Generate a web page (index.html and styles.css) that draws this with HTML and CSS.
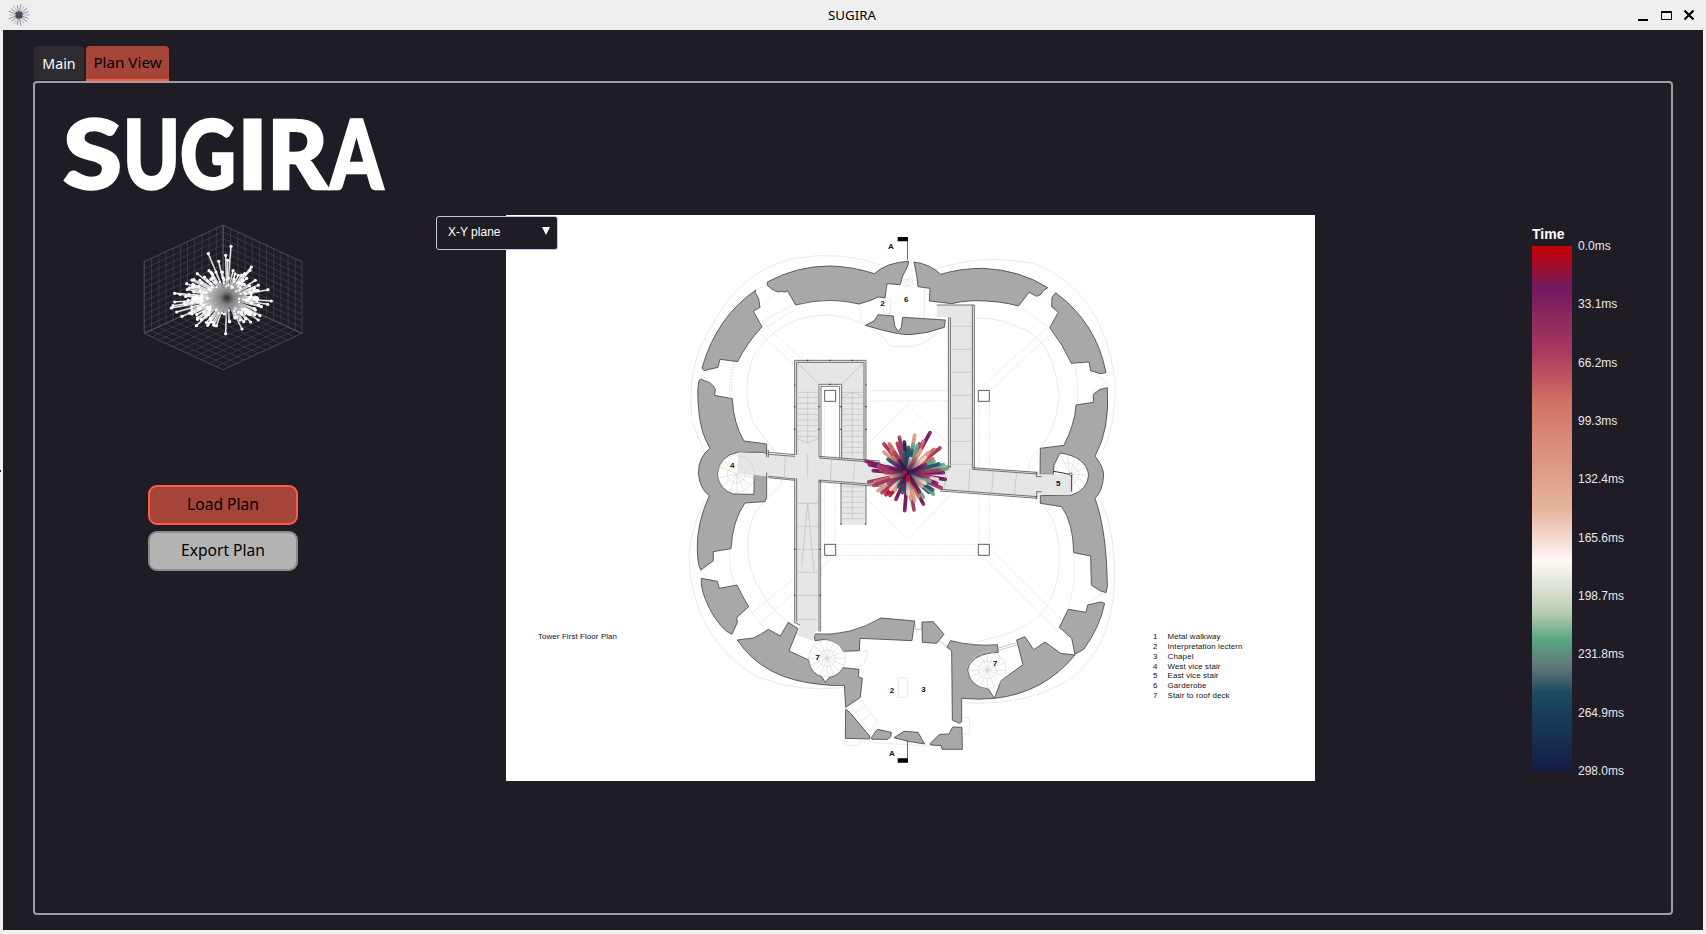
FILE: index.html
```html
<!DOCTYPE html>
<html lang="en">
<head>
<meta charset="utf-8">
<title>SUGIRA</title>
<link rel="stylesheet" href="styles.css">
</head>
<body>
<div class="window">
  <header class="titlebar">
    <svg class="app-icon" viewBox="0 0 22 22"><g id="appRays"></g><rect x="7.5" y="7.5" width="7" height="7" rx="2" fill="#4b4a5c"/></svg>
    <h1 class="title">SUGIRA</h1>
    <svg class="controls" viewBox="0 0 58 14"><path d="M0 12h10" stroke="#000" stroke-width="2"/><path d="M23.5 4.500h10v7h-10z" fill="none" stroke="#000" stroke-width="1"/><path d="M23 4h11" stroke="#000" stroke-width="2"/><path d="M46.500 2.500l9 9m0-9l-9 9" stroke="#000" stroke-width="2.200"/></svg>
  </header>
  <main class="app">
    <nav class="tabs"><span class="tab">Main</span><span class="tab active">Plan View</span></nav>
    <section class="panel">
      <aside class="side">
        <svg class="logo" viewBox="55 100 340 110">
          <g class="word"><text x="63" y="188.500" textLength="59" lengthAdjust="spacingAndGlyphs">S</text><text x="123" y="188.500" textLength="57" lengthAdjust="spacingAndGlyphs">U</text><text x="180" y="188.500" textLength="56" lengthAdjust="spacingAndGlyphs">G</text><text x="237" y="188.500" textLength="31" lengthAdjust="spacingAndGlyphs">I</text><text x="267" y="188.500" textLength="61" lengthAdjust="spacingAndGlyphs">R</text><text x="330" y="188.500" textLength="53" lengthAdjust="spacingAndGlyphs">A</text></g>
        </svg>
        <svg class="cube" viewBox="0 0 480 440">
          <defs><pattern id="cells" width="10" height="10" patternUnits="userSpaceOnUse"><path d="M0 0H10M0 0V10" stroke="#646168" stroke-width="1" fill="none"/></pattern></defs>
          <g transform="translate(-70 -43)">
            <g fill="url(#cells)" stroke="#58555c" stroke-width=".8">
              <rect width="110" height="110" transform="matrix(2.155 -1 0 1.959 73 156)"/>
              <rect width="110" height="110" transform="matrix(2.155 1 0 1.959 310 46)"/>
              <rect width="110" height="110" transform="matrix(2.155 .991 -2.155 .991 310 262)"/>
            </g>
            <g id="whiteBurst"></g>
          </g>
        </svg>
        <div class="buttons"><button class="btn primary">Load Plan</button><button class="btn">Export Plan</button></div>
      </aside>

      <div class="stage">
        <svg class="plan" viewBox="506 215 809 566">
          <rect x="506" y="215" width="809" height="566" fill="#fff"/>
          <g transform="translate(680 220) scale(.33333)">
            <g class="faint">
              <path d="M35 590Q20 430 95 320Q180 150 345 115Q480 90 610 137M760 150Q900 100 1060 130Q1270 210 1305 480Q1310 620 1265 700M1265 845Q1310 950 1303 1100Q1290 1280 1180 1370Q1050 1460 850 1448M75 700L35 600M75 840Q15 960 30 1060Q60 1270 230 1370Q360 1420 493 1402"/>
              <path d="M220 610Q180 510 220 410Q290 290 440 285Q560 290 632 378Q690 386 725 372L830 300Q930 280 1012 320Q1120 350 1138 530Q1130 640 1050 720L1043 790 1070 840Q1140 890 1138 1020Q1135 1180 1010 1230Q920 1265 810 1280M220 610L305 720V795L245 850Q190 920 208 1030Q240 1150 330 1210"/>
              <path d="M848 1492h20v50h-20M495 1555v21h43v-15M540 1565L745 1578M655 1374h28v58h-28zM512 1458l28-20 53 68-27 26zM527 1478l28-20M546 1501l27-20M517 1293h48q-10 50-35 50"/>
              <path d="M672 178h25v22h-25zM678 183h12v12h-12zM537 252l8 55M610 240h22v40h-22zM733 205v65l-2 25M735 205l10 20"/>
            </g>
            <g class="dash">
              <path d="M558 512H895M558 543H895M433 545V974M465 545V974M897 545V974M928 545V974M467 974H895M467 1006H895M235 335L432 520M250 310L455 500M920 520L1110 345M905 500L1100 325M435 1000L215 1180M455 1015L235 1215M905 1005L1130 1230M935 990L1145 1200"/>
              <path d="M682 555L480 755 682 960 883 750ZM245 305L345 250M260 320L360 260M160 430Q145 480 150 530M165 430Q152 480 157 530M150 990Q145 1050 165 1090M1185 430Q1195 480 1193 545M1182 1000Q1190 1080 1165 1160M1025 265L1105 320M65 465L118 440M65 465L106 500M1175 1190L1140 1230M205 1165L260 1235"/>
              <path d="M62 1055L110 1020M62 1060L112 1090M228 210L262 196M240 262L285 220M1103 205L1070 245M1120 218L1090 203M1230 455L1280 485 1235 520M1280 1110L1225 1150M1235 1090L1270 1130"/>
            </g>
            <g class="wall">
              <path d="M262 186Q350 138 450 138 520 140 583 161 620 127 686 124L683 138 668 168 661 194 621 191 615 234 595 231 570 242 537 252Q490 241 450 241 400 241 347 255L322 212Q315 220 305 214 290 222 262 196Z"/>
              <path d="M228 210Q110 290 66 444L72 452 96 446 114 442 120 418 173 425Q200 370 246 320L220 274 240 262 236 236 225 216Z"/>
              <path d="M58 480Q50 500 56 570 62 640 90 685 56 710 55 758 58 805 88 827 50 910 52 985 52 1030 62 1050L100 1022 100 995 153 986Q158 900 195 849L255 845 260 832 260 766 222 766 222 823 160 822Q118 810 112 763 118 705 175 697L250 697 260 705 260 672 192 663Q160 610 157 536L104 526 106 508Q95 485 72 482 64 474 58 480Z"/>
              <path d="M556 316L583 302 594 284 640 288 644 318 655 335 664 322 668 292 796 300 793 322Q740 342 690 344 650 345 556 316Z"/>
              <path d="M702 126Q750 132 782 163 840 145 910 145 1020 150 1103 203L1090 212 1082 224 1070 229 1047 217 1016 258Q960 242 880 242 840 244 815 251L748 243 750 205 714 200 710 165Z"/>
              <path d="M1127 218Q1250 310 1278 458L1260 461 1232 452 1227 426 1174 430Q1150 375 1109 323L1135 277 1115 260 1116 232Z"/>
              <path d="M1282 503Q1290 630 1245 708 1270 740 1271 765 1268 815 1245 835 1280 930 1282 1100L1278 1118 1260 1112 1234 1095 1232 1008 1181 998Q1180 910 1145 860L1081 850V827L1175 825Q1222 810 1226 765 1218 710 1140 699L1122 735 1120 763 1090 763 1080 770 1081 685 1152 676Q1185 610 1188 555L1240 547 1240 523 1260 508Z"/>
            </g>
            <g class="wall" transform="translate(0 660)">
              <path d="M64 418Q62 440 75 475 100 540 140 574L156 583 172 547 170 533 206 500Q190 475 171 435L118 445 112 424 64 415Z"/>
              <path d="M172 600Q250 720 430 734 470 738 493 736L497 802 541 772 547 715 535 710 537 688 488 683Q480 705 447 713L436 727 425 710Q390 700 386 660L327 633 354 566 325 547 301 588 265 568 242 583 220 594Z"/>
              <path d="M402 582Q510 590 603 534L704 543 696 602 540 595 538 632 490 634Q480 605 437 598L405 602Z"/>
              <path d="M497 808L510 818 569 888V897L496 895ZM574 893L592 868 634 877 632 890 624 898 576 898ZM642 893L672 874 714 877 734 912 685 904Z"/>
              <path d="M726 546L760 545 792 583 770 610 727 607Z"/>
              <path d="M812 602Q880 620 952 614L955 637Q875 640 863 690 868 740 925 747L943 775Q900 780 845 775V845L838 850 817 840 815 632 801 622Z"/>
              <path d="M943 775L963 722 1029 674 1010 600 1035 590 1061 629 1095 606 1142 640 1185 645Q1090 760 943 775ZM1185 643L1212 627Q1260 560 1274 490L1262 486 1223 495 1218 517 1165 508 1138 562 1175 595ZM846 862L847 928H786L784 917 751 915V910L779 883 807 882 818 861Z"/>
            </g>
            <g class="walk">
              <path d="M344 421H558V914H483V493H417V1235L344 1210Z"/>
              <path d="M770 255H883V755H805V292H770Z"/>
              <path d="M175 697L265 702 1072 757 1080 763H1172V825H1080L1072 833 265 770 222 766 170 760Z" stroke="none"/>
              <path d="M417 710L558 722V790L417 780Z" stroke="none"/>
              <path d="M358 1213L408 1230 398 1262 350 1245Z" stroke="none"/>
            </g>
            <g class="rail">
              <path d="M344 705V421H558V720M350 705V427H552V720M417 710V493H485V715M423 710V499H479V715M344 775V1208L360 1215M350 775V1205M417 780V1235M422 780V1235M483 790V914M558 795V914M805 744V292M811 744V292M883 747V255H770M877 745V255"/>
              <path d="M265 697L345 704M265 703L345 709M417 709L600 723M417 714L600 728M265 769L345 777M265 773L345 781M417 780L640 798M417 785L640 803M780 735L812 740M877 743L1072 757M877 748L1072 762M780 808L1072 830M780 813L1072 835M260 690V712M265 690V712M260 758V775M1070 755V770H1085M1070 837V815H1085"/>
              <g class="posts"><path d="M344 495v0M344 560v0M344 628v0M558 495v0M558 560v0M558 628v0M417 560v0M417 628v0M483 560v0M483 628v0M383 421v0M450 421v0M517 421v0M450 493v0M483 912v0M556 912v0M344 988v0M420 988v0M344 1126v0M420 1126v0"/></g>
            </g>
            <g class="thin">
              <path d="M350 517H415M350 533H415M350 550H415M350 567H415M350 583H415M350 600H415M350 617H415M350 633H415M350 649H415M487 517H552M487 533H552M487 550H552M487 567H552M487 583H552M487 600H552M487 617H552M487 633H552M487 649H552M487 666H552M487 682H552M487 698H552M383 517V670M517 517V710M350 655L383 670 415 655M487 530L517 517 552 530"/>
              <path d="M487 800H552M487 815H552M487 831H552M487 847H552M487 863H552M487 880H552M487 896H552M517 795V896M350 850H417M350 919H417M350 988H417M350 1057H417M350 1126H417M350 1198H417M365 1040L383 850 402 1055"/>
              <path d="M811 319H877M811 388H877M811 457H877M811 526H877M811 595H877M811 664H877M811 733H877M316 705L313 772M383 702V775M455 717L451 783M525 722L519 787M800 740L793 808M870 745L865 813M940 752L935 820M1010 757L1003 825M350 427L417 493M552 427L485 493"/>
            </g>
            <g class="spiral"><circle cx="169" cy="762" r="55"/><circle cx="169" cy="762" r="27"/><path d="M169 762l-50-22M169 762l-38-40M169 762l-55 12M169 762l-42 36M169 762l-20 53M169 762l3 57M169 762l25 52M169 762l44 35M169 762l53 12"/>
              <circle cx="441" cy="1315" r="55"/><circle cx="441" cy="1315" r="25"/><path d="M386 1315h110M441 1260v110M402 1276l78 78M480 1276l-78 78M420 1264l42 102M462 1264l-42 102M390 1294l102 42M390 1336l102-42"/>
              <circle cx="922" cy="1350" r="55"/><circle cx="922" cy="1350" r="27"/><path d="M867 1350h110M922 1295v110M883 1311l78 78M961 1311l-78 78M901 1299l42 102M943 1299l-42 102M871 1329l102 42M871 1371l102-42"/>
              <path d="M1171 763l-30-58M1171 763l-10-60M1171 763l15-57M1171 763l34-43M1171 763l48-22M1171 763l55 2M1171 763l48 26M1171 763l30 47M1171 763V823M1150 730Q1180 720 1197 760 1195 785 1172 795"/></g>
            <path d="M1121 754L1171 763M1175 763V815" fill="none" stroke="#333" stroke-width="3"/><circle cx="1172" cy="763" r="4" fill="#fff" stroke="#222" stroke-width="2"/>
            <g fill="#fff" stroke="#444" stroke-width="2.6"><path d="M434 511h33v33h-33zM895 511h33v33h-33zM434 973h33v33h-33zM895 973h33v33h-33z"/></g>
            <path d="M955 1284L1010 1268M955 1291L1012 1275M706 1210v18h18v-18M778 1262l25 20" class="door"/>
            <path d="M653 51h31v13h-31zM653 1615h31v13h-31z" fill="#000"/><path d="M682.500 64V120M682.500 1562V1616" stroke="#222" stroke-width="2"/>
          </g>
          <g class="tag"><text x="891" y="248.500">A</text><text x="892" y="756">A</text><text x="882.500" y="306">2</text><text x="906.300" y="302">6</text><text x="732.300" y="468">4</text><text x="1058.200" y="486">5</text><text x="817.500" y="660">7</text><text x="995" y="666">7</text><text x="892" y="692.500">2</text><text x="923.500" y="692">3</text></g>
          <g class="key"><text x="538" y="639" textLength="79">Tower First Floor Plan</text>
            <text x="1153" y="639">1</text><text x="1167.500" y="639" textLength="53">Metal walkway</text>
            <text x="1153" y="649">2</text><text x="1167.500" y="649" textLength="75">Interpretation lectern</text>
            <text x="1153" y="658.500">3</text><text x="1167.500" y="658.500" textLength="26">Chapel</text>
            <text x="1153" y="668.500">4</text><text x="1167.500" y="668.500" textLength="53">West vice stair</text>
            <text x="1153" y="678">5</text><text x="1167.500" y="678" textLength="51">East vice stair</text>
            <text x="1153" y="688">6</text><text x="1167.500" y="688" textLength="39">Garderobe</text>
            <text x="1153" y="697.500">7</text><text x="1167.500" y="697.500" textLength="62">Stair to roof deck</text></g>
          <g id="colorBurst" transform="translate(860 420) scale(.33333)" stroke-linecap="round"></g>
        </svg>
        <div class="select"><span>X-Y plane</span><i class="arrow"></i></div>
      </div>

      <div class="legend">
        <strong>Time</strong>
        <div class="scale"><div class="ramp"></div>
          <div class="ticks"><span>0.0ms</span><span>33.1ms</span><span>66.2ms</span><span>99.3ms</span><span>132.4ms</span><span>165.6ms</span><span>198.7ms</span><span>231.8ms</span><span>264.9ms</span><span>298.0ms</span></div></div>
      </div>
    </section>
  </main>
  <i class="edge-mark"></i>
</div>
<script src="bursts.js"></script>
</body>
</html>
```
FILE: styles.css
```css
* { box-sizing: border-box; }
body { margin: 0; font-family: "Liberation Sans", Arial, sans-serif; color: #fff; }
svg { display: block; }
.window { position: relative; width: 1706px; height: 934px; padding: 0 3px 4px; background: #f0eff1; display: flex; flex-direction: column; overflow: hidden; }
.titlebar { height: 30px; flex: none; margin: 0 -3px; padding: 0 10px 0 8px; background: #eee; display: grid; grid-template-columns: 1fr auto 1fr; align-items: center; }
.app-icon { width: 22px; height: 22px; }
.title { margin: 0; font: 400 13.3px "Noto Sans", sans-serif; color: #000; }
.controls { width: 58px; height: 14px; justify-self: end; }
.app { flex: 1; background: #1f1c26; padding: 16px 30px 15px; display: flex; flex-direction: column; }
.tabs { display: flex; gap: 2px; height: 35px; padding-left: 1px; font: 15.4px/35px "Noto Sans", sans-serif; }
.tab { width: 50px; height: 34px; text-align: center; background: #2e2b33; border-radius: 4px 4px 0 0; font-size: 14.2px; line-height: 36px; }
.tab.active { width: 83px; height: 35px; font-size: 15.2px; color: #000; background: #a54539; border-bottom: 2px solid #ff5e45; line-height: 33px; }
.panel { flex: 1; border: 2px solid #a09d9f; border-radius: 4px; display: flex; align-items: flex-start; padding: 17px 0 0 20px; }
.side { width: 381px; display: flex; flex-direction: column; }
.logo { width: 340px; height: 110px; overflow: visible; }
.word text { font: 900 95px Lato, sans-serif; fill: #fff; stroke: #fff; stroke-width: 2.4px; }
.cube { width: 160px; height: 146.667px; margin: 14px 0 0 88px; }
.buttons { display: grid; gap: 6px; width: 150px; margin: 114px 0 0 93px; }
.btn { height: 40px; padding: 0 0 1px; border: 2px solid #8b8b8b; border-radius: 9px; background: #b3b3b3; color: #000; font: 15.6px "Noto Sans", sans-serif; }
.btn.primary { background: #a54539; border-color: #ff5e45; }
.stage { position: relative; margin: 115px 0 0; padding-left: 70px; }
.plan { width: 809px; height: 566px; }
.select { position: absolute; left: 0; top: 1px; width: 122px; height: 34px; border: 1px solid #b9c6df; border-radius: 3px; background: #1f1c26; display: flex; justify-content: space-between; padding: 8px 7px 0 11px; font-size: 12px; line-height: 14px; }
.arrow { width: 8px; height: 8px; margin-top: 2px; background: #fff; clip-path: polygon(0 0, 100% 0, 50% 100%); }
.legend { margin: 126px 0 0 217px; }
.legend strong { display: block; height: 20px; font-size: 14px; line-height: 16px; }
.scale { display: flex; gap: 6px; }
.ramp { width: 40px; height: 525px; background: linear-gradient(#c80000 0, #72195f 8%, #a83a5e 20%, #d27263 30%, #e6b49c 50%, #fff8f6 60%, #b7cbb0 70%, #5aa583 75%, #5f7478 80.5%, #1b4b60 85%, #141c46 100%); }
.ticks { height: 539px; margin: -7px 0; display: flex; flex-direction: column; justify-content: space-between; font-size: 12px; line-height: 14px; color: #e8e8ea; }
.faint, .dash, .door { fill: none; stroke: #dedede; stroke-width: 2; }
.dash { stroke: #d8d8d8; stroke-dasharray: 6 3; }
.door { stroke: #aaa; }
.wall { fill: #a8a8a8; stroke: #444; stroke-width: 2.5; stroke-linejoin: round; }
.walk { fill: #e6e6e6; }
.rail { fill: none; stroke: #444; stroke-width: 2.2; }
.posts { stroke: #222; stroke-width: 3.6; stroke-linecap: square; }
.thin { fill: none; stroke: #b4b4b4; stroke-width: 1.6; }
.spiral { fill: none; stroke: #ccc; stroke-width: 1.5; }
.tag text { font-size: 8px; font-weight: 700; text-anchor: middle; fill: #111; }
.key text { font-size: 7.9px; fill: #111; }
.edge-mark { position: absolute; left: 0; top: 470px; width: 1px; height: 2px; background: #222; }
```
FILE: bursts.js
```js
let seed = 11;
const rnd = () => (seed = (seed * 16807) % 2147483647) / 2147483647;
const put = (id, html) => { document.getElementById(id).innerHTML = html; };

let out = '';
for (let i = 0; i < 18; i++) {
  const a = i * Math.PI / 9, r = i % 2 ? 10 : 11;
  out += `<path d="M11 11L${11 + r * Math.cos(a)} ${11 + r * Math.sin(a)}" stroke="${i % 3 ? '#8f8e9a' : '#b9b8c0'}" stroke-width="1"/>`;
}
put('appRays', out);

// White burst: long named rays first, then a dense random fill
const cx = 322, cy = 265;
const tips = [[334,110],[266,132],[318,137],[297,155],[324,152],[395,172],[391,182],[233,192],[268,183],[165,251],[201,222],[165,277],[155,295],[187,320],[171,307],[230,348],[318,372],[367,358],[455,274],[445,240],[444,284],[421,318],[407,212],[393,337],[416,331],[425,291],[264,347],[290,348],[347,325],[356,197],[340,183],[181,254],[160,288],[402,236],[212,310]];
for (let i = 0; i < 170; i++) {
  const a = rnd() * 2 * Math.PI, k = .4 + .6 * rnd();
  tips.push([cx - 12 + Math.cos(a) * 118 * k, cy + 2 + Math.sin(a) * (Math.sin(a) < 0 ? 92 : 84) * k]);
}
out = `<defs><radialGradient id="ray" gradientUnits="userSpaceOnUse" cx="${cx}" cy="${cy}" r="70"><stop offset="0" stop-color="#222"/><stop offset=".3" stop-color="#8a898b"/><stop offset=".7" stop-color="#c4c3c4"/><stop offset="1" stop-color="#f0f0f0"/></radialGradient></defs>`;
// Short rays lie over long ones, each a thick light shaft with a shaded edge
tips.sort((p, q) => Math.hypot(q[0] - cx, q[1] - cy) - Math.hypot(p[0] - cx, p[1] - cy));
for (const [x, y] of tips) {
  out += `<path d="M${cx} ${cy}L${x} ${y + .1}" stroke="url(#ray)" stroke-width="4.600"/><path d="M${cx} ${cy}L${x + 2} ${y + 2.1}" stroke="#6b6a6c" stroke-width=".8"/><circle cx="${x}" cy="${y}" r="${Math.hypot(x - cx, y - cy) < 55 ? 3.4 : 4.8}" fill="#fff"/>`;
}
put('whiteBurst', out);

// Coloured burst: tip x, tip y, colour
const P = '#7b1c62', M = '#a33a5e', R = '#c9695f', S = '#dd9a84', W = '#ead2c6', G = '#62a386', T = '#27566a', N = '#1c2b55';
const rays = [[72,72,M],[118,52,M],[164,46,S],[210,38,P],[190,64,R],[178,72,M],[240,84,M],[222,88,R],[112,70,M],[88,72,R],[160,72,G],[172,78,G],[133,66,N],[145,82,T],[72,96,S],[94,92,R],[104,98,M],[84,118,T],[98,112,R],[130,96,T],[155,90,T],[182,90,S],[205,98,S],[218,116,R],[196,112,W],[18,124,P],[28,134,P],[40,152,P],[56,138,M],[62,150,M],[26,186,M],[44,186,R],[42,196,M],[54,212,S],[66,218,M],[78,224,'#b71935'],[90,226,'#b71935'],[92,208,W],[104,210,S],[86,190,M],[108,238,P],[134,272,P],[162,270,M],[190,252,P],[152,236,S],[164,242,S],[176,230,R],[190,232,G],[206,216,N],[220,222,G],[218,210,T],[244,204,M],[256,178,P],[262,146,G],[250,134,G],[222,124,G],[236,132,T],[250,158,P],[240,150,M],[232,178,W],[230,190,P],[210,184,G],[206,170,M],[186,198,S],[196,190,W],[152,116,W],[166,112,R],[120,112,M],[104,130,P],[118,122,N],[82,140,P],[76,158,M],[94,170,S],[196,134,P],[178,216,P],[128,218,T],[144,222,W],[116,200,T],[130,194,P]];
out = '<defs><radialGradient id="core" gradientUnits="userSpaceOnUse" cx="143" cy="160" r="55"><stop offset="0" stop-color="#251744" stop-opacity=".95"/><stop offset="1" stop-color="#251744" stop-opacity="0"/></radialGradient></defs>';
rays.forEach(([x, y, c]) => { out += `<path d="M143 160L${x} ${y}" stroke="${c}" stroke-width="11"/><circle cx="${x}" cy="${y}" r="4.500" fill="#fff" opacity=".1"/>`; });
out += '<circle cx="143" cy="160" r="55" fill="url(#core)"/><g fill="#d3062b"><circle cx="134" cy="157" r="6"/><circle cx="144" cy="171" r="6"/><circle cx="142" cy="180" r="6"/></g>';
put('colorBurst', out);
```
